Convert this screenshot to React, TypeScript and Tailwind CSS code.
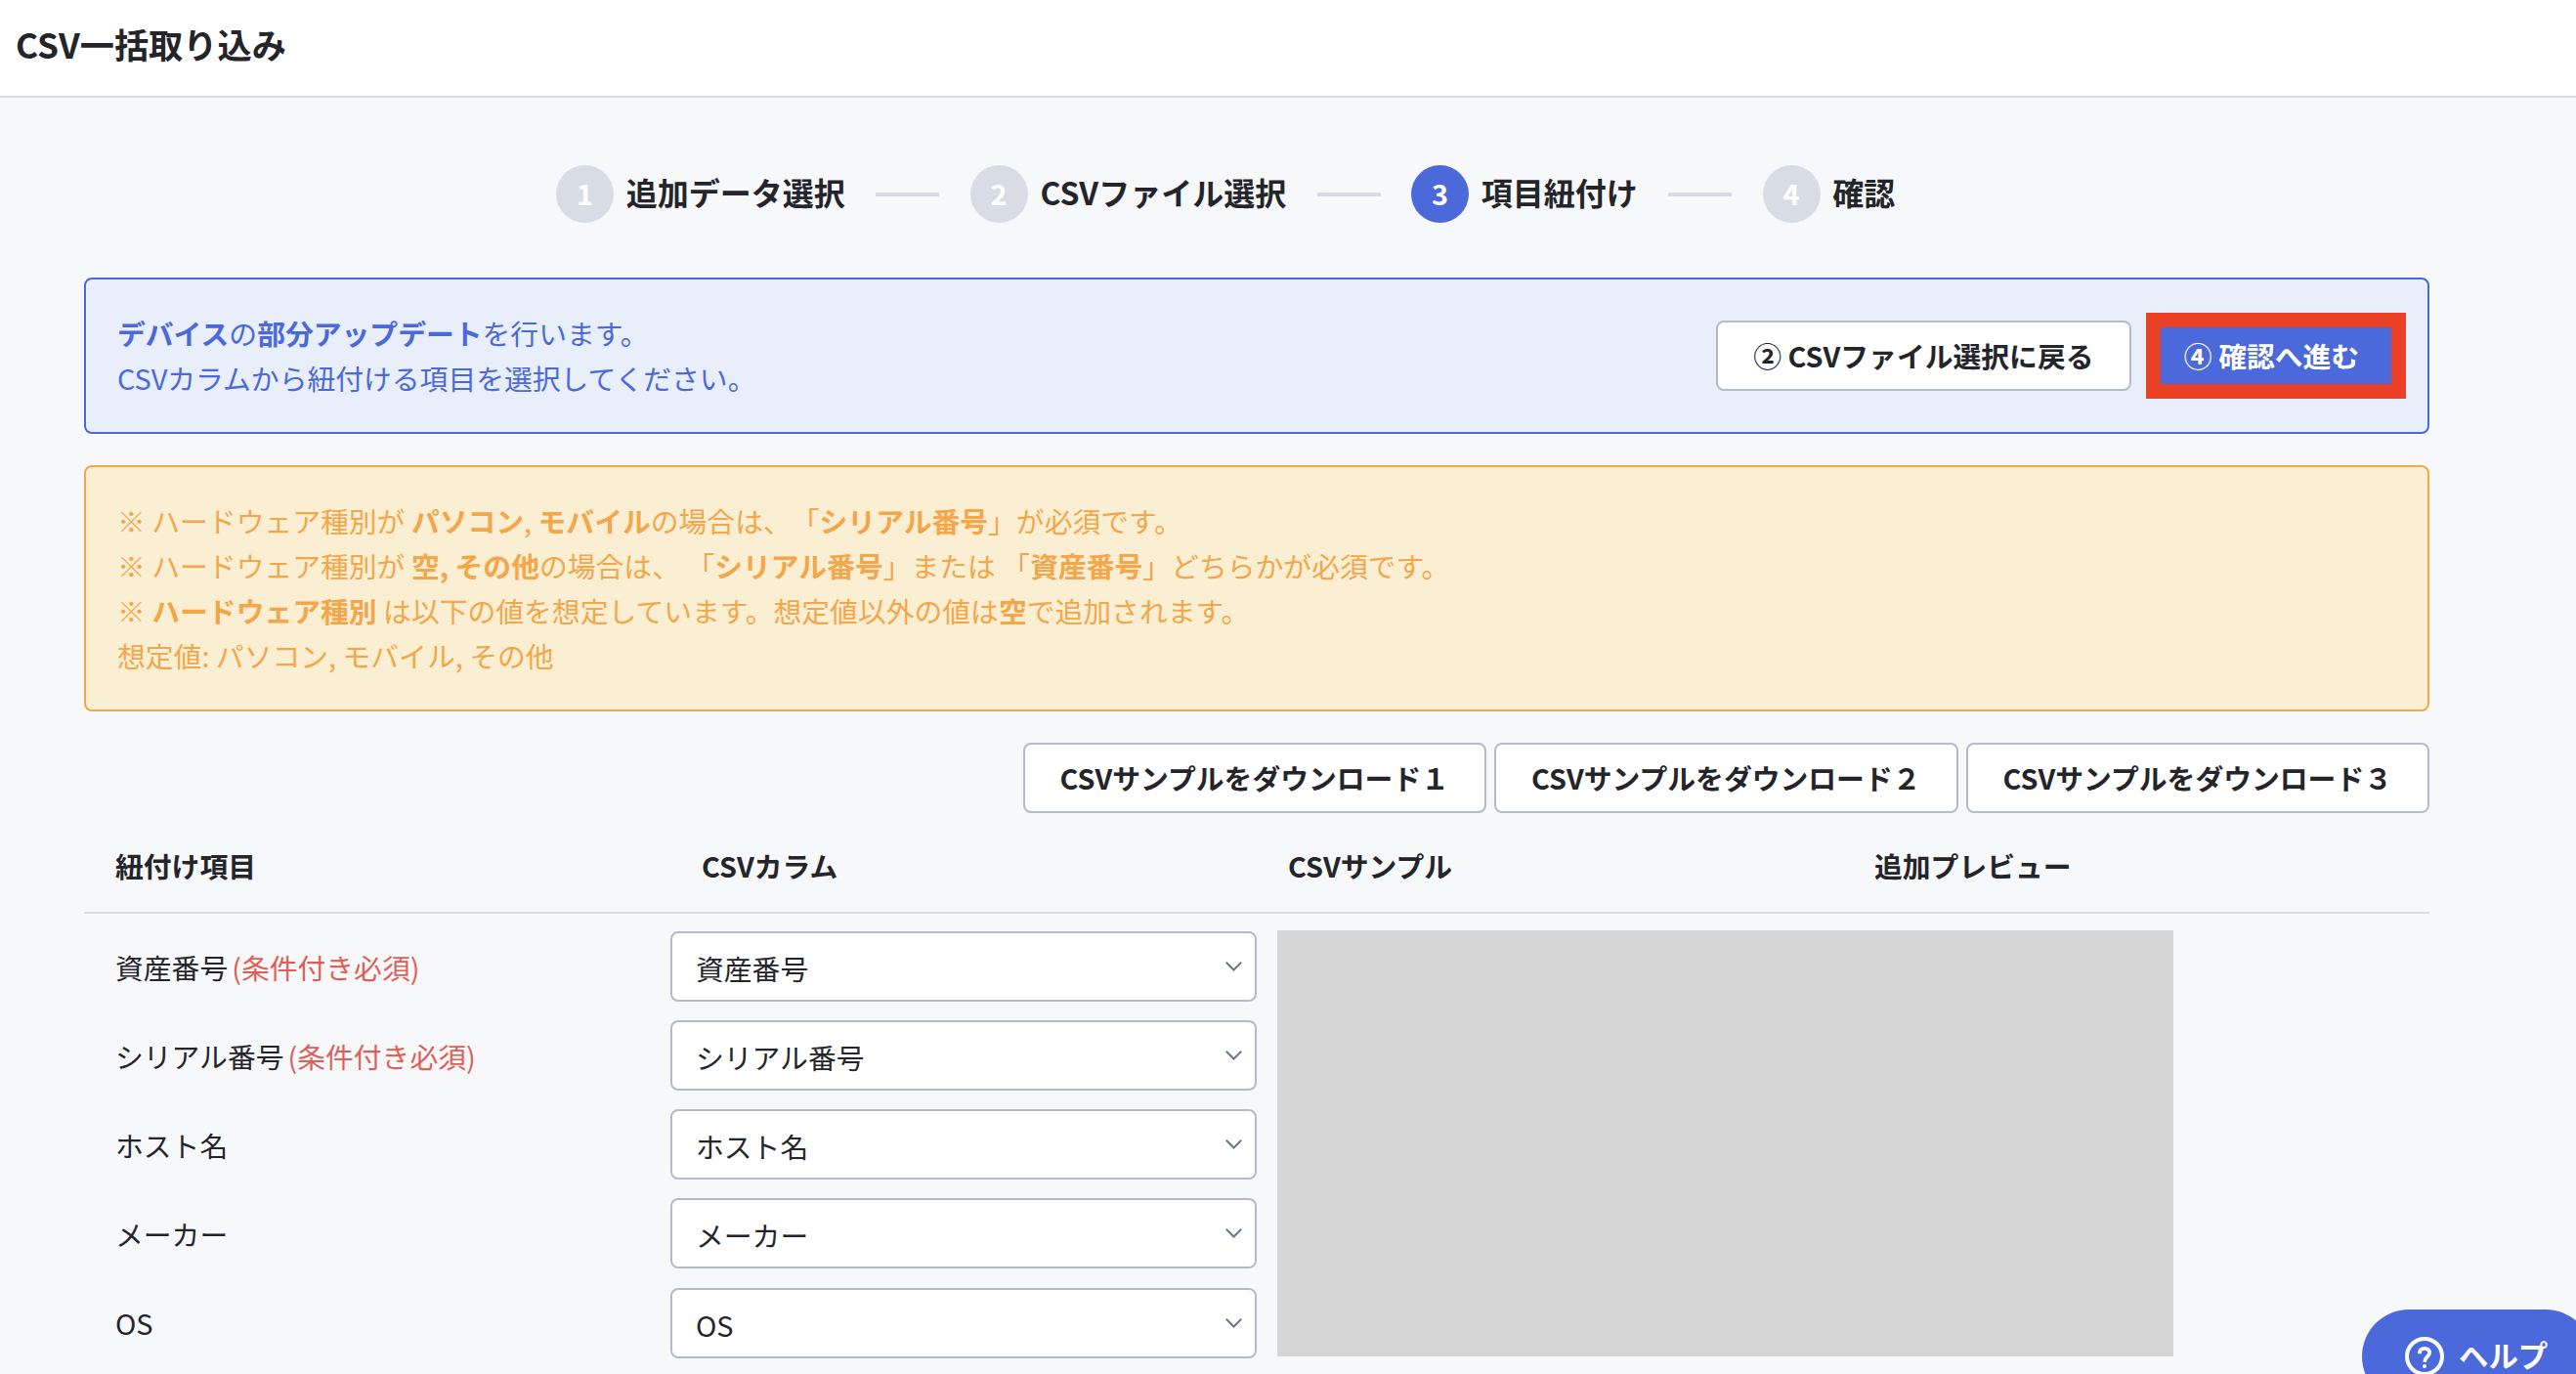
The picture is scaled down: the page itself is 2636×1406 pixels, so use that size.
import { Fragment, type ReactNode } from "react";

const steps = ["追加データ選択", "CSVファイル選択", "項目紐付け", "確認"];
const activeStep = 2;

const columns = ["紐付け項目", "CSVカラム", "CSVサンプル", "追加プレビュー"];

const rows = [
  { name: "資産番号", required: true },
  { name: "シリアル番号", required: true },
  { name: "ホスト名", required: false },
  { name: "メーカー", required: false },
  { name: "OS", required: false },
];

function Stepper() {
  return (
    <div className="mt-[69px] ml-[569px] flex h-[59px] items-center">
      {steps.map((label, i) => (
        <Fragment key={label}>
          {i > 0 && <div className="mx-[31.4px] h-1 w-[65px] shrink-0 bg-[#d8dce5]" />}
          <div
            className={
              "flex size-[59px] shrink-0 items-center justify-center rounded-full text-[28.8px] leading-none font-bold text-white " +
              (i === activeStep ? "bg-[#4b69db]" : "bg-[#d8dce5]")
            }
          >
            {i + 1}
          </div>
          <div className="ml-[12.8px] pb-1.5 text-[32px] leading-none font-bold whitespace-nowrap">{label}</div>
        </Fragment>
      ))}
    </div>
  );
}

function Button({ children }: { children: ReactNode }) {
  return (
    <button className="flex h-[72px] items-center justify-center rounded-lg border-2 border-[#b4bac9] bg-white px-9 font-bold whitespace-nowrap">
      {children}
    </button>
  );
}

function Select({ value }: { value: string }) {
  return (
    <div className="flex h-[72px] w-[600px] items-center justify-between rounded-lg border-2 border-[#b4bac9] bg-white pr-[13.5px] pl-6">
      <span className="pt-1">{value}</span>
      <svg width="17" height="10" viewBox="0 0 17 10" fill="none" stroke="#6b758b" strokeWidth="2">
        <path d="M0.8 0.8 L8.5 8.5 L16.2 0.8" />
      </svg>
    </div>
  );
}

function HelpButton() {
  return (
    <button className="absolute top-[1340px] left-[2417px] flex h-24 w-[236px] items-center rounded-full bg-[#4b69db] pl-11 text-[30.4px] leading-none font-bold whitespace-nowrap text-white">
      <svg className="mr-[15px] shrink-0" width="40" height="40" viewBox="0 0 40 40" fill="none">
        <circle cx="20" cy="20" r="18" stroke="white" strokeWidth="4" />
        <path
          d="M15 17.2 V16.3 C15 13.5 17.2 11.8 20 11.8 C22.9 11.8 25.1 13.6 25.1 16.3 C25.1 20.3 20.2 20.3 20.2 25.8"
          stroke="white"
          strokeWidth="3.8"
        />
        <circle cx="20" cy="30" r="2.1" fill="white" />
      </svg>
      <span className="pb-1">ヘルプ</span>
    </button>
  );
}

export default function App() {
  return (
    <div
      lang="ja"
      className="relative h-[1406px] w-[2636px] overflow-hidden bg-[#f7f8fa] font-['Noto_Sans_CJK_JP',sans-serif] text-[28.8px] leading-[46px] text-[#23252b] [text-spacing-trim:space-all]"
    >
      <header className="flex h-[100px] items-center border-b-2 border-[#d8dce5] bg-white pb-2 pl-4">
        <h1 className="text-[35.2px] leading-none font-bold">CSV一括取り込み</h1>
      </header>

      <Stepper />

      <main className="mt-14 ml-[86px] w-[2400px]">
        <section className="flex h-40 items-center justify-between rounded-lg border-2 border-[#4b69db] bg-[#e8eefa] pl-8 text-[#4b69db]">
          <p>
            <b>デバイス</b>の<b>部分アップデート</b>を行います。
            <br />
            CSVカラムから紐付ける項目を選択してください。
          </p>
          <div className="mr-[22px] flex items-center gap-[15.5px] text-[#23252b]">
            <Button>② CSVファイル選択に戻る</Button>
            <button className="flex h-[88px] w-[266px] items-center justify-center border-[15px] border-[#ea4025] bg-[#4b69db] pr-[9px] font-bold whitespace-nowrap text-white">
              ④ 確認へ進む
            </button>
          </div>
        </section>

        <section className="mt-8 h-[252px] rounded-lg border-2 border-[#f3a64a] bg-[#fbefd3] p-8 text-[#f3a64a]">
          <p>
            ※ ハードウェア種別が <b>パソコン</b>, <b>モバイル</b>の場合は、「<b>シリアル番号</b>」が必須です。
          </p>
          <p>
            ※ ハードウェア種別が <b>空, その他</b>の場合は、 「<b>シリアル番号</b>」または 「<b>資産番号</b>」どちらかが必須です。
          </p>
          <p>
            ※ <b>ハードウェア種別</b> は以下の値を想定しています。想定値以外の値は<b>空</b>で追加されます。
          </p>
          <p>想定値: パソコン, モバイル, その他</p>
        </section>

        <div className="mt-8 flex justify-end gap-2">
          <Button>CSVサンプルをダウンロード１</Button>
          <Button>CSVサンプルをダウンロード２</Button>
          <Button>CSVサンプルをダウンロード３</Button>
        </div>

        <div className="grid h-[103px] grid-cols-4 items-center border-b-2 border-[#d8dce5] font-bold">
          {columns.map((c) => (
            <div key={c} className="pt-1.5 pl-8">
              {c}
            </div>
          ))}
        </div>

        <div className="mt-[18px] flex flex-col gap-[19.15px]">
          {rows.map((row) => (
            <div key={row.name} className="grid h-[72px] grid-cols-4 items-center">
              <div className="pt-px pl-8 whitespace-nowrap">
                {row.name}
                {row.required && <span className="ml-1 text-[#df5f57]">(条件付き必須)</span>}
              </div>
              <Select value={row.name} />
            </div>
          ))}
        </div>
      </main>

      <div className="absolute top-[951.5px] left-[1306.5px] h-[436px] w-[917px] bg-[#d6d6d6]" />
      <HelpButton />
    </div>
  );
}
